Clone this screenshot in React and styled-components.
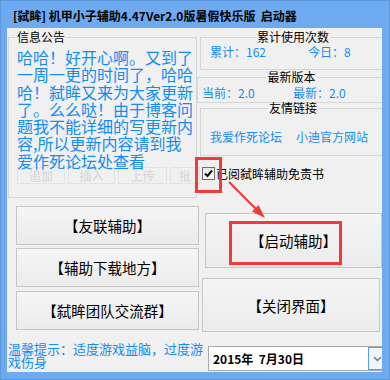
import React from "react";
import styled, { createGlobalStyle } from "styled-components";

const CJK = `"Noto Sans CJK SC", "Noto Sans", sans-serif`;
const BLUE = "#168cf0";
const RED = "#f03a3a";

const GlobalStyle = createGlobalStyle`
  html, body { margin: 0; padding: 0; background: #6eaaf0; }
  body { width: 390px; height: 380px; overflow: hidden; font-family: ${CJK}; }
  * { box-sizing: border-box; }
`;

const Frame = styled.div`
  width: 390px;
  height: 380px;
  background: #6eaaf0;
  border: 1px solid #5d97dc;
  display: flex;
  flex-direction: column;
  padding: 0 7px 7px 6px;
`;

const TitleBar = styled.div`
  height: 27px;
  flex: none;
  display: flex;
  align-items: center;
  padding-left: 6px;
  padding-top: 1px;
  font-size: 12px;
  font-weight: bold;
  color: #000;
  white-space: pre;
`;

const Content = styled.div`
  flex: 1;
  display: flex;
  background: #f0f0f0;
  position: relative;
  overflow: hidden;
`;

const Column = styled.div`
  flex: none;
  width: ${(p) => p.$w}px;
  display: flex;
  flex-direction: column;
`;

const GroupBox = styled.fieldset`
  flex: none;
  margin: ${(p) => p.$mt || 0}px 0 0 ${(p) => p.$ml || 0}px;
  padding: ${(p) => p.$pad || "0"};
  border: 1px solid #d6d6d6;
  width: ${(p) => p.$w}px;
  height: ${(p) => p.$h}px;
  min-width: 0;
`;

const Legend = styled.legend`
  font-size: 12px;
  line-height: 14px;
  color: #000;
  padding: 0 1px;
  margin: ${(p) => (p.$center ? "0 auto" : "0 0 0 -1px")};
`;

const Notice = styled.div`
  font-size: 16px;
  line-height: 17.3px;
  color: ${BLUE};
  white-space: pre;
`;

const StatRow = styled.div`
  display: grid;
  grid-template-columns: ${(p) => p.$cols};
  padding-left: ${(p) => p.$pl}px;
  font-size: 12px;
  line-height: 16px;
  color: ${BLUE};
`;

const Stat = styled.span`
  white-space: nowrap;
  overflow: ${(p) => (p.$clip ? "hidden" : "visible")};
  max-width: ${(p) => (p.$clip ? `${p.$clip}px` : "none")};
`;

const PushButton = styled.button`
  flex: none;
  margin: ${(p) => p.$mt}px 0 0 ${(p) => p.$ml}px;
  width: ${(p) => p.$w}px;
  height: ${(p) => p.$h}px;
  border: 1px solid #c6c6c6;
  border-radius: 0;
  background: linear-gradient(#f5f5f5, #ebebeb);
  font-family: ${CJK};
  font-size: 14.5px;
  color: #000;
  padding: 0;
`;

const Hint = styled.div`
  margin: 12px 0 0 1px;
  width: 200px;
  font-size: 13px;
  line-height: 13px;
  color: ${BLUE};
  white-space: pre;
`;

const CheckRow = styled.label`
  flex: none;
  margin: 11px 0 0 2px;
  height: 13px;
  display: flex;
  align-items: center;
  gap: 1px;
  font-size: 12px;
  line-height: 13px;
  color: #000;
`;

const CheckBox = styled.span`
  width: 13px;
  height: 13px;
  border: 1px solid #6f6f6f;
  background: linear-gradient(#e8e8e8, #fafafa);
  display: flex;
  align-items: center;
  justify-content: center;
`;

const DatePicker = styled.div`
  flex: none;
  margin: 14px 0 0 8px;
  width: 180px;
  height: 25px;
  border: 1px solid #a9a9a9;
  background: #fff;
  display: flex;
  align-items: center;
  padding-left: 4px;
  font-size: 12px;
  font-weight: bold;
  color: #000;
  white-space: pre;
`;

const DropButton = styled.span`
  margin-left: auto;
  width: 19px;
  height: 100%;
  border: 1px solid #5a9ee0;
  background: #eef5fd;
  display: flex;
  align-items: center;
  padding-left: 4px;
`;

const RedBox = styled.div`
  position: absolute;
  left: ${(p) => p.$x}px;
  top: ${(p) => p.$y}px;
  width: ${(p) => p.$w}px;
  height: ${(p) => p.$h}px;
  border: 3px solid ${RED};
  pointer-events: none;
`;

const ArrowSvg = styled.svg`
  position: absolute;
  left: 215px;
  top: 150px;
  pointer-events: none;
`;

const GhostBar = styled.div`
  position: absolute;
  left: 10px;
  top: 139px;
  display: flex;
  gap: 3px;
  pointer-events: none;
`;

const GhostItem = styled.span`
  width: ${(p) => p.$w}px;
  height: 17px;
  border: 1px solid rgba(0, 0, 0, 0.05);
  display: flex;
  align-items: center;
  justify-content: center;
  font-size: 12px;
  font-weight: bold;
  color: rgba(0, 0, 0, 0.1);
`;

const noticeText = [
  "哈哈！好开心啊。又到了",
  "一周一更的时间了，哈哈",
  "哈！弑眸又来为大家更新",
  "了。么么哒！由于博客问",
  "题我不能详细的写更新内",
  "容,所以更新内容请到我",
  "爱作死论坛处查看",
].join("\n");

export default function App() {
  return (
    <>
      <GlobalStyle />
      <Frame>
        <TitleBar>{"[弑眸] 机甲小子辅助4.47Ver2.0版暑假快乐版  启动器"}</TitleBar>
        <Content>
          <Column $w={193}>
            <GroupBox $mt={2} $ml={1} $w={189} $h={168} $pad="5px 0 0 8px">
              <Legend>信息公告</Legend>
              <Notice>{noticeText}</Notice>
            </GroupBox>
            <PushButton $mt={8} $ml={9} $w={183} $h={39}>【友联辅助】</PushButton>
            <PushButton $mt={3} $ml={9} $w={183} $h={39}>【辅助下载地方】</PushButton>
            <PushButton $mt={4} $ml={9} $w={183} $h={39}>【弑眸团队交流群】</PushButton>
            <Hint>{"温馨提示：适度游戏益脑，过度游\n戏伤身"}</Hint>
          </Column>
          <Column $w={190}>
            <GroupBox $mt={2} $w={186} $h={40} $pad="0 0 0 0">
              <Legend $center>累计使用次数</Legend>
              <StatRow $cols="98px auto" $pl={9}>
                <Stat $clip={56}>累计：1626</Stat>
                <Stat>今日：8</Stat>
              </StatRow>
            </GroupBox>
            <GroupBox $ml={-3} $w={189} $h={33} $pad="1px 0 0 0">
              <Legend $center>最新版本</Legend>
              <StatRow $cols="91px auto" $pl={4}>
                <Stat>当前：2.0</Stat>
                <Stat>最新：2.0</Stat>
              </StatRow>
            </GroupBox>
            <GroupBox $mt={-2} $w={186} $h={55} $pad="14px 0 0 0">
              <Legend $center>友情链接</Legend>
              <StatRow $cols="86px auto" $pl={9}>
                <Stat>我爱作死论坛</Stat>
                <Stat>小迪官方网站</Stat>
              </StatRow>
            </GroupBox>
            <CheckRow>
              <CheckBox>
                <svg width="9" height="9" viewBox="0 0 9 9">
                  <path d="M1 4.5 L3.5 7 L8 1.5" fill="none" stroke="#111" strokeWidth="2" />
                </svg>
              </CheckBox>
              已阅弑眸辅助免责书
            </CheckRow>
            <PushButton $mt={33} $ml={5} $w={177} $h={55}>【启动辅助】</PushButton>
            <PushButton $mt={10} $ml={2} $w={178} $h={54}>【关闭界面】</PushButton>
            <DatePicker>
              {"2015年  7月30日"}
              <DropButton>
                <svg width="9" height="6" viewBox="0 0 9 6">
                  <path d="M1 1 L4.5 4.5 L8 1" fill="none" stroke="#777" strokeWidth="1.4" />
                </svg>
              </DropButton>
            </DatePicker>
          </Column>

          <GhostBar>
            <GhostItem $w={48}>追加</GhostItem>
            <GhostItem $w={47}>插入</GhostItem>
            <GhostItem $w={49}>上传</GhostItem>
            <GhostItem $w={30}>批</GhostItem>
          </GhostBar>
          <RedBox $x={188} $y={129} $w={27} $h={36} />
          <RedBox $x={222} $y={193} $w={113} $h={44} />
          <ArrowSvg width="50" height="45" viewBox="0 0 50 45">
            <line x1="7" y1="4" x2="36" y2="33" stroke={RED} strokeWidth="2.2" />
            <polygon points="43,40 30,33.5 36.5,27" fill={RED} />
          </ArrowSvg>
        </Content>
      </Frame>
    </>
  );
}
